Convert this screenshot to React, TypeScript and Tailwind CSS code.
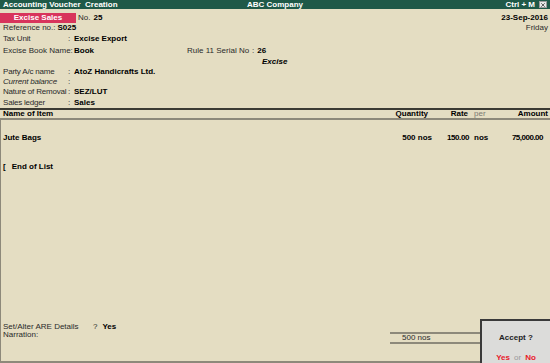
import { X } from "lucide-react";

const label = "text-[#2a2a2a]";
const value = "font-bold text-black";

const Field = ({ name, val, italic }: { name: string; val?: string; italic?: boolean }) => (
  <div className="flex h-full items-center">
    <span className={`w-[65px] tracking-[-0.2px] ${label} ${italic ? "italic" : ""}`}>{name}</span>
    <span className={`w-[6px] ${label}`}>:</span>
    {val && <span className={value}>{val}</span>}
  </div>
);

export default function App() {
  return (
    <div className="relative flex h-[363px] w-[550px] flex-col overflow-hidden whitespace-nowrap bg-[#e4ddc2] font-['Liberation_Sans',Arial,sans-serif] text-[8px] leading-none">
      {/* Title bar */}
      <div className="flex h-[9px] items-center bg-[#1f5948] px-[3px] font-bold text-white">
        <div className="flex-1">Accounting Voucher&nbsp; Creation</div>
        <div>ABC Company</div>
        <div className="flex flex-1 items-center justify-end gap-[4px]">
          <span>Ctrl + M</span>
          <span className="flex h-[7px] w-[8px] items-center justify-center border border-[#9a9a9a] bg-[#e8e8e8] text-[#333]">
            <X size={6} strokeWidth={3} />
          </span>
        </div>
      </div>

      {/* Voucher header */}
      <div className="mt-[4px] flex h-[10px] items-center">
        <div className="flex h-full w-[76px] items-center justify-center bg-[#d8345c] font-bold text-white">
          Excise Sales
        </div>
        <span className={`ml-[2px] ${label}`}>No.</span>
        <span className={`ml-[3px] ${value}`}>25</span>
        <span className={`ml-auto pr-[2px] ${value}`}>23-Sep-2016</span>
      </div>
      <div className="flex h-[10px] items-center pl-[3px]">
        <span className={label}>Reference no.:</span>
        <span className={`ml-[2px] ${value}`}>S025</span>
        <span className={`ml-auto pr-[2px] ${label}`}>Friday</span>
      </div>
      <div className="h-[12px] pl-[3px]">
        <Field name="Tax Unit" val="Excise Export" />
      </div>
      <div className="flex h-[11px] items-center pl-[3px]">
        <span className={`w-[71px] ${label}`}>Excise Book Name:</span>
        <span className={`w-[113px] ${value}`}>Book</span>
        <span className={label}>Rule 11 Serial No</span>
        <span className={`ml-[3px] ${label}`}>:</span>
        <span className={`ml-[3px] ${value}`}>26</span>
      </div>
      <div className="flex h-[11px] items-center pl-[262px] font-bold italic">Excise</div>
      <div className="h-[10px] pl-[3px]">
        <Field name="Party A/c name" val="AtoZ Handicrafts Ltd." />
      </div>
      <div className="h-[10px] pl-[3px]">
        <Field name="Current balance" italic />
      </div>
      <div className="h-[10px] pl-[3px]">
        <Field name="Nature of Removal" val="SEZ/LUT" />
      </div>
      <div className="h-[11px] pl-[3px]">
        <Field name="Sales ledger" val="Sales" />
      </div>

      {/* Table header */}
      <div className="flex h-[12px] items-center border-y-2 border-t-[#3b3a33] border-b-[#8d897a] font-bold">
        <div className="flex-1 pl-[3px]">Name of Item</div>
        <div className="w-[52px] pr-[4px] text-right">Quantity</div>
        <div className="w-[37px] pr-[1px] text-right">Rate</div>
        <div className="w-[21px] pl-[5px] font-normal text-[#7c7a72]">per</div>
        <div className="w-[60px] pr-[2px] text-right">Amount</div>
      </div>

      {/* Items */}
      <div className="flex flex-1 flex-col border-l border-[#8d897a]">
        <div className="mt-[13px] flex h-[10px] items-center font-bold">
          <div className="flex-1 pl-[2px]">Jute Bags</div>
          <div className="w-[52px] text-right">500 nos</div>
          <div className="w-[37px] text-right tracking-[-0.4px]">150.00</div>
          <div className="w-[21px] pl-[5px]">nos</div>
          <div className="w-[60px] pr-[7px] text-right tracking-[-0.5px]">75,000.00</div>
        </div>
        <div className="mt-[19px] flex h-[10px] items-center pl-[2px] font-bold">
          <span>[</span>
          <span className="ml-[6px]">End of List</span>
        </div>

        <div className="flex-1" />

        {/* Footer */}
        <div className="flex h-[41px] border-b-2 border-[#8d897a] pt-[1px]">
          <div className="flex flex-col pl-[2px]">
            <div className="flex h-[8px] items-center">
              <span className={`w-[90px] ${label}`}>Set/Alter ARE Details</span>
              <span className={label}>?</span>
              <span className={`ml-[5px] ${value}`}>Yes</span>
            </div>
            <div className={`flex h-[8px] items-center ${label}`}>Narration:</div>
          </div>
          <div className="ml-auto mr-[70px] mt-[9px] flex h-[12px] w-[90px] items-center border-y-2 border-[#8d897a] pl-[12px] text-[#2a2a2a]">
            500 nos
          </div>
        </div>
      </div>

      {/* Accept dialog */}
      <div className="absolute bottom-0 right-0 flex h-[44px] w-[70px] flex-col items-center border-l-2 border-t-2 border-[#3a3a3a] bg-[#dcdcda]">
        <div className="mt-[13px] font-bold text-[#222]">Accept ?</div>
        <div className="mt-[12px] flex items-center gap-[4px]">
          <span className="font-bold text-[#e8202a]">Yes</span>
          <span className="text-[#9a9a9a]">or</span>
          <span className="font-bold text-[#e8202a]">No</span>
        </div>
      </div>
    </div>
  );
}
